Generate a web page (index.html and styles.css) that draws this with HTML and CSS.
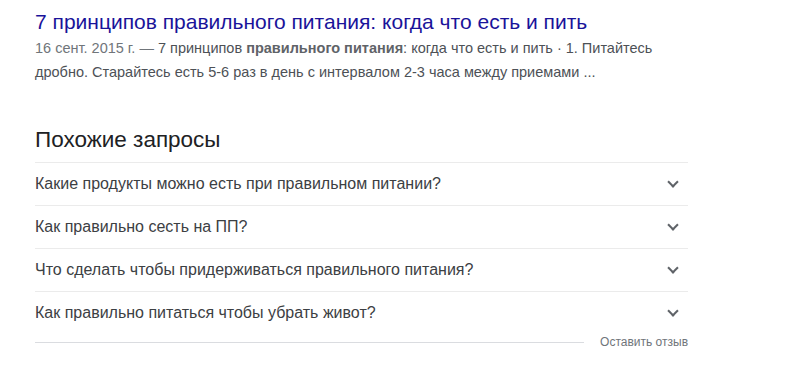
FILE: index.html
```html
<html>
  <head>
    <link rel="stylesheet" href="styles.css">
    <title>Похожие запросы</title>
  </head>
  <body>
    <div class="result">
      <a class="title" href="#">7 принципов правильного питания: когда что есть и пить</a>
      <div class="snippet">
        <span class="date">16 сент. 2015 г. — </span>7 принципов <b>правильного питания</b>: когда что есть и пить · 1. Питайтесь
        дробно. Старайтесь есть 5-6 раз в день с интервалом 2-3 часа между приемами ...
      </div>
    </div>

    <div class="related">
      <h2>Похожие запросы</h2>
      <ul class="questions">
        <li>Какие продукты можно есть при правильном питании?<span class="chevron"></span></li>
        <li>Как правильно сесть на ПП?<span class="chevron"></span></li>
        <li>Что сделать чтобы придерживаться правильного питания?<span class="chevron"></span></li>
        <li>Как правильно питаться чтобы убрать живот?<span class="chevron"></span></li>
      </ul>
      <div class="feedback">
        <span class="line"></span>
        <a href="#">Оставить отзыв</a>
      </div>
    </div>
  </body>
</html>
```

FILE: styles.css
```css
body {
  margin: 0;
  padding: 9px 35px 0;
  font-family: "Liberation Sans", Arial, sans-serif;
  background: #fff;
  color: #202124;
}

.result {
  width: 652px;
}

.title {
  display: block;
  font-size: 21px;
  line-height: 26px;
  color: #1a139a;
  text-decoration: none;
}

.snippet {
  margin-top: 1px;
  font-size: 14.5px;
  line-height: 24px;
  color: #4d5156;
}

.snippet .date {
  color: #70757a;
}

.snippet b {
  color: #5f6368;
}

.related {
  width: 653px;
  margin-top: 42px;
}

h2 {
  margin: 0;
  font-size: 22.5px;
  font-weight: normal;
  line-height: 28px;
  padding-bottom: 8px;
  border-bottom: 1px solid #ebebeb;
}

.questions {
  list-style: none;
  margin: 0;
  padding: 0;
}

.questions li {
  display: flex;
  justify-content: space-between;
  align-items: center;
  height: 42px;
  font-size: 16px;
  color: #3c4043;
  border-bottom: 1px solid #ebebeb;
}

.chevron {
  width: 6px;
  height: 6px;
  margin-right: 11px;
  margin-top: -4px;
  border-right: 2px solid #5f6368;
  border-bottom: 2px solid #5f6368;
  transform: rotate(45deg);
}

.questions li:last-child {
  border-bottom: none;
}

.feedback {
  display: flex;
  align-items: center;
  gap: 16px;
  height: 16px;
}

.feedback .line {
  flex: 1;
  border-top: 1px solid #dadce0;
}

.feedback a {
  font-size: 12px;
  color: #70757a;
  text-decoration: none;
}
```
